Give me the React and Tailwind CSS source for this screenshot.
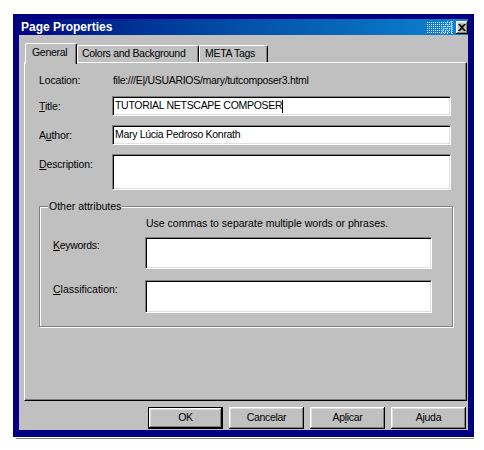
import React from "react";

const sunken =
  "bg-white border border-t-[#808080] border-l-[#808080] border-b-white border-r-white shadow-[inset_1px_1px_0_#000,inset_-1px_-1px_0_#dfdfdf]";

const raised =
  "bg-[#c0c0c0] shadow-[inset_-1px_-1px_0_#000,inset_1px_1px_0_#fff,inset_-2px_-2px_0_#808080,inset_2px_2px_0_#dfdfdf]";

function U({ children }) {
  return <span className="underline underline-offset-[1px]">{children}</span>;
}

function Dither() {
  return (
    <svg width="26" height="15" viewBox="0 0 26 15" className="block">
      <defs>
        <pattern id="dots" width="2" height="2" patternUnits="userSpaceOnUse">
          <rect x="0" y="0" width="1" height="1" fill="#fff" />
        </pattern>
      </defs>
      <rect x="0" y="1" width="18" height="13" fill="url(#dots)" />
      <rect x="18" y="1" width="8" height="13" fill="url(#dots)" opacity="0.8" />
      <path d="M14 14 L21 1 M17 14 L24 1 M20 14 L25 5" stroke="#fff" strokeWidth="1" strokeDasharray="1 1" />
      <path d="M25 1 V14" stroke="#fff" strokeWidth="1" strokeDasharray="1 1" />
    </svg>
  );
}

function TitleBar() {
  return (
    <div className="h-[16px] flex items-center bg-gradient-to-r from-[#000080] via-[#0550a8] to-[#1084d0] pl-[2px]">
      <span className="text-white font-bold text-[12px] leading-none tracking-normal">Page Properties</span>
      <div className="ml-auto flex items-center">
        <Dither />
        <div className={`${raised} w-[12px] h-[13px] ml-[3px] flex items-center justify-center`}>
          <svg width="8" height="7" viewBox="0 0 8 7">
            <path d="M0 0h2l2 2 2-2h2L5 3.5 8 7H6L4 5 2 7H0l3-3.5z" fill="#000" />
          </svg>
        </div>
      </div>
    </div>
  );
}

function Tabs() {
  const tab =
    "h-[17px] flex items-center whitespace-nowrap border-t border-l border-white rounded-t-[2px] shadow-[inset_-1px_0_0_#808080] border-r border-r-black bg-[#c0c0c0]";
  return (
    <div className="h-[19px] flex items-end ml-[1px] relative z-10">
      <div className={`${tab} h-[21px] -mb-[2px] w-[52px] pb-[2px] pl-[6px]`}>General</div>
      <div className={`${tab} w-[122px] pl-[4px]`}>Colors and Background</div>
      <div className={`${tab} w-[69px] pl-[5px]`}>META Tags</div>
    </div>
  );
}

function Row({ label, labelClass = "", children, className = "" }) {
  return (
    <div className={`flex items-start ${className}`}>
      <div className={`w-[73px] leading-[13px] tracking-[-0.15px] ${labelClass}`}>{label}</div>
      {children}
    </div>
  );
}

function Button({ children, isDefault }) {
  return (
    <div
      className={`w-[75px] h-[22px] flex items-center justify-center ${
        isDefault ? "border border-black" : ""
      }`}
    >
      <div className={`${raised} w-full h-full flex items-center justify-center`}>{children}</div>
    </div>
  );
}

export default function App() {
  return (
    <div className="w-[484px] h-[450px] bg-white pt-[14px] pl-[13px] font-['Liberation_Sans',Arial,sans-serif] text-[10.5px] tracking-[-0.3px] text-black">
      <div className="w-[461px] h-[423px] bg-[#000080] pt-[5px] px-[6px] pb-[7px] flex flex-col">
        <TitleBar />
        <div className="flex-1 bg-[#c0c0c0] flex flex-col pl-[5px] pr-[1px] pt-[8px]">
          <Tabs />

          {/* tab panel */}
          <div className="h-[339px] border-t border-l border-white border-r border-b border-r-black border-b-black shadow-[inset_-1px_-1px_0_#808080] pl-[14px] pt-[11px]">
            <Row label="Location:" className="h-[13px]">
              <div className="leading-[13px] ml-[1px]">file:///E|/USUARIOS/mary/tutcomposer3.html</div>
            </Row>

            <Row label={<><U>T</U>itle:</>} labelClass="mt-[4px]" className="mt-[9px]">
              <div className={`${sunken} w-[339px] h-[20px] flex items-center pl-[2px]`}>
                TUTORIAL NETSCAPE COMPOSER
                <span className="inline-block w-px h-[13px] bg-black" />
              </div>
            </Row>

            <Row label={<>A<U>u</U>thor:</>} labelClass="mt-[4px]" className="mt-[9px]">
              <div className={`${sunken} w-[339px] h-[20px] flex items-center pl-[2px]`}>
                Mary Lúcia Pedroso Konrath
              </div>
            </Row>

            <Row label={<><U>D</U>escription:</>} labelClass="mt-[4px]" className="mt-[9px]">
              <div className={`${sunken} w-[339px] h-[36px]`} />
            </Row>

            {/* group box */}
            <div className="relative mt-[16px] w-[414px] h-[121px] border border-[#808080] shadow-[inset_1px_1px_0_#fff,1px_1px_0_#fff] pl-[13px] pt-[10px]">
              <span className="absolute -top-[7px] left-[8px] bg-[#c0c0c0] px-[1px] leading-[13px] tracking-normal">
                Other attributes
              </span>
              <div className="pl-[93px] leading-[13px] tracking-normal">
                Use commas to separate multiple words or phrases.
              </div>
              <div className="flex items-start mt-[7px]">
                <div className="w-[92px] leading-[13px] mt-[2px]">
                  <U>K</U>eywords:
                </div>
                <div className={`${sunken} w-[287px] h-[32px]`} />
              </div>
              <div className="flex items-start mt-[11px]">
                <div className="w-[92px] leading-[13px] mt-[3px] tracking-normal">
                  <U>C</U>lassification:
                </div>
                <div className={`${sunken} w-[287px] h-[33px]`} />
              </div>
            </div>
          </div>

          {/* buttons */}
          <div className="mt-[6px] flex justify-end gap-[6px] pr-[1px]">
            <Button isDefault>OK</Button>
            <Button>Cancelar</Button>
            <Button>
              <span>
                Ap<U>l</U>icar
              </span>
            </Button>
            <Button>Ajuda</Button>
          </div>
        </div>
      </div>
      <div className="ml-[3px] w-[458px] h-px mt-px bg-[#808080]" />
    </div>
  );
}
